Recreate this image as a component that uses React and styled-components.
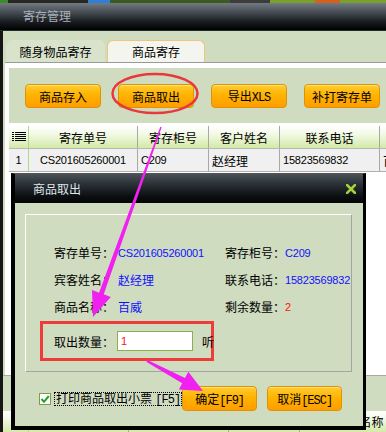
import React from "react";
import styled, { createGlobalStyle, css } from "styled-components";

const GlobalStyle = createGlobalStyle`
  *, *::before, *::after { box-sizing: border-box; }
  html, body { margin: 0; padding: 0; }
  body {
    width: 386px;
    height: 432px;
    overflow: hidden;
    font-family: "Liberation Sans", "Noto Sans CJK SC", sans-serif;
    font-size: 12px;
    color: #000;
    background: #fff;
  }
`;

const GREEN = "#d0dcc0";

const Screen = styled.div`
  position: relative;
  width: 386px;
  height: 432px;
  overflow: hidden;
  display: flex;
  flex-direction: column;
  background: #fff;
`;

const DesktopStrip = styled.div`
  flex: none;
  height: 3px;
  background: linear-gradient(
    90deg,
    #3c8c2c 0 8px,
    #262a22 8px 88px,
    #2f7fd8 88px 110px,
    #3a5a22 110px 230px,
    #3c3c3c 230px 270px,
    #7aa22a 270px 315px,
    #d8601a 315px 340px,
    #7aa22a 340px
  );
`;

const TitleBar = styled.div`
  flex: none;
  height: 28px;
  display: flex;
  align-items: center;
  padding: 0 0 2px 23px;
  color: #a9b1ba;
  font-size: 12px;
  background: linear-gradient(#747a82 0%, #4c5259 30%, #181c20 70%, #000 100%);
  border-bottom: 1px solid #1d2b2d;
`;

const Main = styled.div`
  flex: 1;
  min-height: 0;
  display: flex;
  flex-direction: column;
  background: ${GREEN};
  border-left: 3px solid #151515;
`;

const TabBar = styled.div`
  flex: none;
  display: flex;
  gap: 2px;
  padding: 9px 0 0 3px;
`;

const Tab = styled.div`
  width: ${(p) => p.$w}px;
  height: 22px;
  display: flex;
  align-items: center;
  justify-content: center;
  border-radius: 6px 6px 0 0;
  font-size: 12px;
  ${(p) =>
    p.$active
      ? css`
          background: #f3f5ee;
          border: 1px solid #f0c47a;
          border-bottom: none;
        `
      : css`
          background: #d9e3cc;
        `}
`;

const Panel = styled.div`
  flex: 1;
  min-height: 0;
  display: flex;
  flex-direction: column;
  margin-left: 2px;
  padding: 5px 0 0 4px;
  background: #fff;
  border-top: 1px solid #9a9a9a;
`;

const Toolbar = styled.div`
  flex: none;
  height: 55px;
  display: flex;
  align-items: flex-start;
  gap: 17px;
  padding: 16px 0 0 16px;
  margin-bottom: 3px;
  background: ${GREEN};
`;

const OrangeButton = styled.div`
  flex: none;
  width: ${(p) => p.$w || 76}px;
  height: ${(p) => p.$h || 24}px;
  display: flex;
  align-items: center;
  justify-content: center;
  border: 1px solid #e19200;
  border-radius: 4px;
  background: linear-gradient(#ffcc33 0%, #ffb300 45%, #ff9d00 100%);
  box-shadow: inset 0 1px 0 #ffe27a;
  font-size: 12px;
  color: #000;
  white-space: nowrap;
`;

const Mono = styled.span`
  font-family: "Liberation Mono", monospace;
  font-size: 12px;
  letter-spacing: -1px;
`;

const HeaderRow = styled.div`
  flex: none;
  height: 23px;
  display: flex;
  background: linear-gradient(#ffffff 0%, #f3f9e8 35%, #d3eaa6 100%);
  border-bottom: 1px solid #b8b8b8;
`;

const HeaderCell = styled.div`
  flex: none;
  width: ${(p) => p.$w}px;
  display: flex;
  align-items: center;
  justify-content: center;
  border-right: 1px solid ${(p) => (p.$first ? "#b6d48a" : "#a8a8a8")};
  font-size: 12px;
  white-space: nowrap;
  overflow: hidden;
`;

const DataRow = styled.div`
  flex: none;
  height: 23px;
  display: flex;
  background: #f0f0f0;
  border-bottom: 1px solid #b0b0b0;
`;

const DataCell = styled.div`
  flex: none;
  width: ${(p) => p.$w}px;
  display: flex;
  align-items: center;
  justify-content: ${(p) => (p.$center ? "center" : "flex-start")};
  padding-left: ${(p) => (p.$center ? 0 : 3)}px;
  border-right: 1px solid ${(p) => (p.$first ? "#b6d48a" : "#a8a8a8")};
  font-size: ${(p) => (p.$num ? "11px" : "12px")};
  letter-spacing: ${(p) => (p.$num ? "-0.2px" : "0")};
  white-space: nowrap;
  overflow: hidden;
`;

const Spacer = styled.div`
  flex: 1;
`;

const LowerSection = styled.div`
  flex: none;
  height: 57px;
  display: flex;
  flex-direction: column;
  margin-left: -6px;
  border-top: 1px solid #a8a8a8;
`;

const LowerBand = styled.div`
  flex: none;
  height: 35px;
  background: ${GREEN};
`;

const LowerHeader = styled(HeaderRow)`
  padding-left: 6px;
  border-bottom: none;
  flex: 1;
`;

/* ---------- dialog ---------- */

const Dialog = styled.div`
  position: absolute;
  left: 11px;
  top: 173px;
  width: 355px;
  height: 257px;
  z-index: 5;
  display: flex;
  flex-direction: column;
  background: ${GREEN};
  border-style: solid;
  border-color: #555 #000 #000 #000;
  border-width: 1px 3px 4px 4px;
`;

const DialogTitle = styled.div`
  flex: none;
  height: 29px;
  display: flex;
  align-items: center;
  justify-content: space-between;
  padding: 0 7px 0 18px;
  color: #dfe6ec;
  font-size: 12px;
  background: linear-gradient(#4a5258 0%, #262c31 40%, #0a0d0f 80%, #030405 100%);
`;

const DialogBody = styled.div`
  flex: 1;
  display: flex;
  flex-direction: column;
  padding: 11px 11px 0 10px;
`;

const FieldBox = styled.div`
  flex: none;
  height: 158px;
  padding: 24px 0 0 28px;
  border-style: solid;
  border-width: 1px;
  border-color: #ffffff #a4a4a4 #a4a4a4 #ffffff;
`;

const InfoGrid = styled.div`
  display: grid;
  grid-template-columns: 64px 107px 60px 1fr;
  grid-auto-rows: 27px;
  align-items: center;
  white-space: nowrap;
`;

const Label = styled.span`
  font-size: 12px;
  color: #000;
`;

const Value = styled.span`
  color: ${(p) => (p.$red ? "#ff1010" : "#1010ff")};
  font-size: ${(p) => (p.$num ? "11px" : "12px")};
  letter-spacing: ${(p) => (p.$num ? "-0.2px" : "0")};
`;

const QtyRow = styled.div`
  margin: 1px 0 0 -14px;
  width: 174px;
  height: 40px;
  display: flex;
  align-items: center;
  padding-left: 11px;
  border: 3px solid #ee3b3b;
  white-space: nowrap;
`;

const QtyLabel = styled.span`
  width: 63px;
  flex: none;
`;

const QtyInput = styled.div`
  flex: none;
  width: 76px;
  height: 20px;
  display: flex;
  align-items: center;
  padding-left: 3px;
  background: #fff;
  border: 1px solid #8fad4f;
  color: #ff1010;
  font-size: 11px;
`;

const Unit = styled.span`
  margin-left: 9px;
`;

const Footer = styled.div`
  display: flex;
  align-items: center;
  padding: 14px 15px 0 14px;
`;

const CheckBox = styled.div`
  flex: none;
  width: 12px;
  height: 12px;
  display: flex;
  align-items: center;
  justify-content: center;
  background: #fff;
  border: 1px solid #7c9c4c;
`;

const CheckLabel = styled.span`
  margin-left: 3px;
  height: 14px;
  line-height: 12px;
  padding: 0 1px;
  border: 1px dotted #000;
  white-space: nowrap;
`;

const ButtonGroup = styled.div`
  margin-left: auto;
  display: flex;
  gap: 10px;
`;

const Overlay = styled.svg`
  position: absolute;
  left: 0;
  top: 0;
  z-index: 10;
  pointer-events: none;
`;

const ListIcon = () => (
  <svg width="14" height="10" viewBox="0 0 14 10">
    {[0, 2, 4, 6, 8].map((y) => (
      <g key={y}>
        <rect x="0" y={y} width="2" height="1" fill="#000" />
        <rect x="3" y={y} width="11" height="1" fill="#000" />
      </g>
    ))}
  </svg>
);

const CloseIcon = () => (
  <svg width="10" height="10" viewBox="0 0 10 10">
    <path d="M1 1 L9 9 M9 1 L1 9" stroke="#a6cf3e" strokeWidth="2.6" strokeLinecap="square" />
  </svg>
);

const CheckMark = () => (
  <svg width="10" height="10" viewBox="0 0 10 10">
    <path d="M1.5 5 L4 7.8 L8.8 2" stroke="#23a023" strokeWidth="2" fill="none" />
  </svg>
);

const cols = [20, 109, 71, 71, 100, 110];

export default function App() {
  return (
    <Screen>
      <GlobalStyle />
      <DesktopStrip />
      <TitleBar>寄存管理</TitleBar>
      <Main>
        <TabBar>
          <Tab $w={99}>随身物品寄存</Tab>
          <Tab $w={98} $active>
            商品寄存
          </Tab>
        </TabBar>
        <Panel>
          <Toolbar>
            <OrangeButton>商品存入</OrangeButton>
            <OrangeButton>商品取出</OrangeButton>
            <OrangeButton>
              <span>
                导出<Mono>XLS</Mono>
              </span>
            </OrangeButton>
            <OrangeButton>补打寄存单</OrangeButton>
          </Toolbar>
          <HeaderRow>
            <HeaderCell $w={cols[0]} $first>
              <ListIcon />
            </HeaderCell>
            <HeaderCell $w={cols[1]}>寄存单号</HeaderCell>
            <HeaderCell $w={cols[2]}>寄存柜号</HeaderCell>
            <HeaderCell $w={cols[3]}>客户姓名</HeaderCell>
            <HeaderCell $w={cols[4]}>联系电话</HeaderCell>
            <HeaderCell $w={cols[5]}></HeaderCell>
          </HeaderRow>
          <DataRow>
            <DataCell $w={cols[0]} $first $center $num>
              1
            </DataCell>
            <DataCell $w={cols[1]} $center $num>
              CS201605260001
            </DataCell>
            <DataCell $w={cols[2]} $num>
              C209
            </DataCell>
            <DataCell $w={cols[3]}>赵经理</DataCell>
            <DataCell $w={cols[4]} $num>
              15823569832
            </DataCell>
            <DataCell $w={cols[5]}>百威</DataCell>
          </DataRow>
          <Spacer />
          <LowerSection>
            <LowerBand />
            <LowerHeader>
              <HeaderCell $w={20} $first />
              <HeaderCell $w={100}>序号</HeaderCell>
              <HeaderCell $w={100}>商品编号</HeaderCell>
              <HeaderCell $w={71}>数量</HeaderCell>
              <HeaderCell $w={120}>商品名称</HeaderCell>
            </LowerHeader>
          </LowerSection>
        </Panel>
      </Main>

      <Dialog>
        <DialogTitle>
          <span>商品取出</span>
          <CloseIcon />
        </DialogTitle>
        <DialogBody>
          <FieldBox>
            <InfoGrid>
              <Label>寄存单号：</Label>
              <Value $num>CS201605260001</Value>
              <Label>寄存柜号：</Label>
              <Value $num>C209</Value>

              <Label>宾客姓名：</Label>
              <Value>赵经理</Value>
              <Label>联系电话：</Label>
              <Value $num>15823569832</Value>

              <Label>商品名称：</Label>
              <Value>百威</Value>
              <Label>剩余数量：</Label>
              <Value $num $red>
                2
              </Value>
            </InfoGrid>
            <QtyRow>
              <QtyLabel>取出数量：</QtyLabel>
              <QtyInput>1</QtyInput>
              <Unit>听</Unit>
            </QtyRow>
          </FieldBox>
          <Footer>
            <CheckBox>
              <CheckMark />
            </CheckBox>
            <CheckLabel>
              打印商品取出小票 <Mono>[F5]</Mono>
            </CheckLabel>
            <ButtonGroup>
              <OrangeButton $w={75} $h={25}>
                <span>
                  确定<Mono>[F9]</Mono>
                </span>
              </OrangeButton>
              <OrangeButton $w={75} $h={25}>
                <span>
                  取消<Mono>[ESC]</Mono>
                </span>
              </OrangeButton>
            </ButtonGroup>
          </Footer>
        </DialogBody>
      </Dialog>

      <Overlay width="386" height="432" viewBox="0 0 386 432">
        <ellipse cx="155" cy="93.5" rx="42.5" ry="19.5" fill="none" stroke="#e8383c" strokeWidth="2.5" />
        <polygon
          fill="#f020f0"
          points="160.34,126.76 161.66,127.24 103.75,294.34 110.8,296.9 93,317 92,290.1 99.05,292.66"
        />
        <polygon
          fill="#f020f0"
          points="147.47,360.12 185.02,377.96 188.32,371.79 203,391 178.88,389.41 182.18,383.24 146.53,361.88"
        />
      </Overlay>
    </Screen>
  );
}
